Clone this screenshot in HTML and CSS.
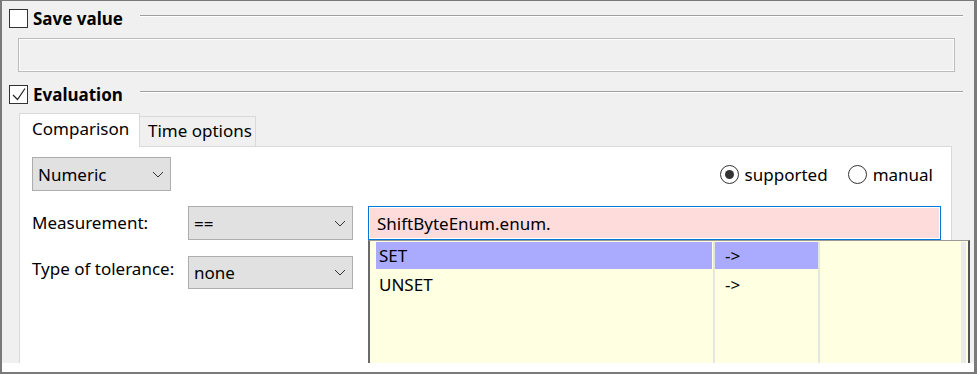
FILE: index.html
```html
<!DOCTYPE html>
<html lang="en">
<head>
    <meta charset="UTF-8">
    <title>Evaluation settings</title>
    <link rel="stylesheet" href="styles.css">
</head>
<body>
<div class="window">
    <div class="main">
        <div class="group-head">
            <span class="check"></span>
            <span class="group-title">Save value</span>
            <span class="rule"></span>
        </div>
        <div class="disabled-field"></div>

        <div class="group-head group-eval">
            <span class="check">
                <svg width="17" height="17" viewBox="0 0 17 17"><path d="M3 9 L7.5 13.5 L15 2.5" fill="none" stroke="#222" stroke-width="1.2"/></svg>
            </span>
            <span class="group-title">Evaluation</span>
            <span class="rule"></span>
        </div>

        <div class="tabs">
            <div class="tab-strip">
                <div class="tab active">Comparison</div>
                <div class="tab">Time options</div>
            </div>
            <div class="tab-panel">
                <div class="top-row">
                    <div class="combo combo-type">
                        <span>Numeric</span>
                        <svg class="chevron" width="12" height="7" viewBox="0 0 12 7"><path d="M1 1 L6 6 L11 1" fill="none" stroke="#333" stroke-width="1"/></svg>
                    </div>
                    <div class="radios">
                        <div class="radio-item"><span class="radio on"></span>supported</div>
                        <div class="radio-item"><span class="radio"></span>manual</div>
                    </div>
                </div>
                <div class="form">
                    <div class="label">Measurement:</div>
                    <div class="combo">
                        <span>==</span>
                        <svg class="chevron" width="12" height="7" viewBox="0 0 12 7"><path d="M1 1 L6 6 L11 1" fill="none" stroke="#333" stroke-width="1"/></svg>
                    </div>
                    <div class="expr">ShiftByteEnum.enum.</div>

                    <div class="label label-low">Type of tolerance:</div>
                    <div class="combo combo-short">
                        <span>none</span>
                        <svg class="chevron" width="12" height="7" viewBox="0 0 12 7"><path d="M1 1 L6 6 L11 1" fill="none" stroke="#333" stroke-width="1"/></svg>
                    </div>
                </div>
            </div>
        </div>
    </div>

    <div class="popup">
        <div class="col col-name">
            <div class="cell selected">SET</div>
            <div class="cell">UNSET</div>
        </div>
        <div class="col col-arrow">
            <div class="cell selected">-&gt;</div>
            <div class="cell">-&gt;</div>
        </div>
        <div class="col col-rest"></div>
        <div class="scroll-strip"></div>
    </div>
</div>
</body>
</html>
```

FILE: styles.css
```css
body {
    margin: 0;
    font-family: "Noto Sans", "Segoe UI", sans-serif;
    font-size: 17px;
    color: #000;
    background: #fff;
}
.window {
    position: relative;
    width: 977px;
    height: 374px;
    box-sizing: border-box;
    border: 2px solid #7a7a7a;
    border-top-width: 1px;
    border-right-width: 3px;
    background: #fff;
}
.main {
    height: 362px;
    box-sizing: border-box;
    padding-top: 8px;
    background: #f0f0f0;
    overflow: hidden;
}
.group-head {
    display: flex;
    align-items: center;
    height: 19px;
    margin-left: 7px;
}
.group-eval {
    margin-top: 13px;
}
.check {
    width: 19px;
    height: 19px;
    box-sizing: border-box;
    border: 1px solid #333;
    background: #fff;
    display: flex;
}
.group-title {
    font-weight: bold;
    margin-left: 5px;
}
.rule {
    flex: 1;
    align-self: flex-start;
    margin: 6px 11px 0 17px;
    border-top: 1px solid #a0a0a0;
    border-bottom: 1px solid #fff;
}
.disabled-field {
    height: 34px;
    margin: 10px 19px 0 16px;
    box-sizing: border-box;
    border: 1px solid #bcbcbc;
    box-shadow: inset 0 0 0 1px #fbfbfb;
    background: #f0f0f0;
}
.tabs {
    margin: 9px 22px 0 17px;
}
.tab-strip {
    display: flex;
    align-items: flex-end;
    height: 33px;
}
.tab {
    height: 30px;
    width: 116px;
    box-sizing: border-box;
    padding: 0 0 2px 8px;
    display: flex;
    align-items: center;
    border: 1px solid #d9d9d9;
    border-left: none;
    border-bottom: none;
    background: #f0f0f0;
}
.tab.active {
    width: 121px;
    height: 34px;
    padding: 0 0 4px 12px;
    margin-bottom: -1px;
    border-left: 1px solid #d9d9d9;
    background: #fff;
    position: relative;
}
.tab-panel {
    height: 300px;
    box-sizing: border-box;
    padding: 10px 9px 0 12px;
    border: 1px solid #d9d9d9;
    background: #fff;
}
.top-row {
    display: flex;
    justify-content: space-between;
    align-items: center;
    padding-right: 9px;
}
.combo {
    height: 34px;
    box-sizing: border-box;
    padding: 0 6px 0 5px;
    display: flex;
    align-items: center;
    justify-content: space-between;
    border: 1px solid #adadad;
    background: #e1e1e1;
}
.combo-type {
    width: 139px;
}
.combo-short {
    height: 33px;
}
.radios {
    display: flex;
    gap: 20px;
}
.radio-item {
    display: flex;
    align-items: center;
    gap: 6px;
}
.radio {
    width: 19px;
    height: 19px;
    box-sizing: border-box;
    border: 1px solid #333;
    border-radius: 50%;
    background: #fff;
    display: flex;
    align-items: center;
    justify-content: center;
}
.radio.on::after {
    content: "";
    width: 9px;
    height: 9px;
    border-radius: 50%;
    background: #333;
}
.form {
    display: grid;
    grid-template-columns: 156px 165px 588px;
    row-gap: 16px;
    align-items: center;
    margin-top: 15px;
}
.label {
    padding-bottom: 2px;
}
.label-low {
    padding-bottom: 8px;
}
.expr {
    height: 34px;
    box-sizing: border-box;
    margin-left: 15px;
    padding-left: 8px;
    display: flex;
    align-items: center;
    border: 1px solid #0078d7;
    box-shadow: inset 0 0 0 1px #fff;
    background: #ffdcdc;
}
.popup {
    position: absolute;
    left: 366px;
    top: 239px;
    width: 602px;
    height: 123px;
    box-sizing: border-box;
    padding: 1px 0 0 6px;
    display: flex;
    border-left: 2px solid #6a6a6a;
    border-right: 2px solid #555;
    border-top: 1px solid #9a9a9a;
    background: #ffffe1;
}
.col {
    display: flex;
    flex-direction: column;
    gap: 2px;
    border-right: 2px solid #e4e6e2;
}
.col-name {
    width: 337px;
}
.col-arrow {
    width: 103px;
}
.col-rest {
    width: 141px;
    border-right: none;
}
.scroll-strip {
    width: 5px;
    background: #ebebeb;
}
.cell {
    height: 27px;
    display: flex;
    align-items: center;
    padding-left: 3px;
}
.col-name .cell {
    margin-right: 1px;
}
.col-arrow .cell {
    padding-left: 10px;
}
.cell.selected {
    background: #aaaaff;
}
```
